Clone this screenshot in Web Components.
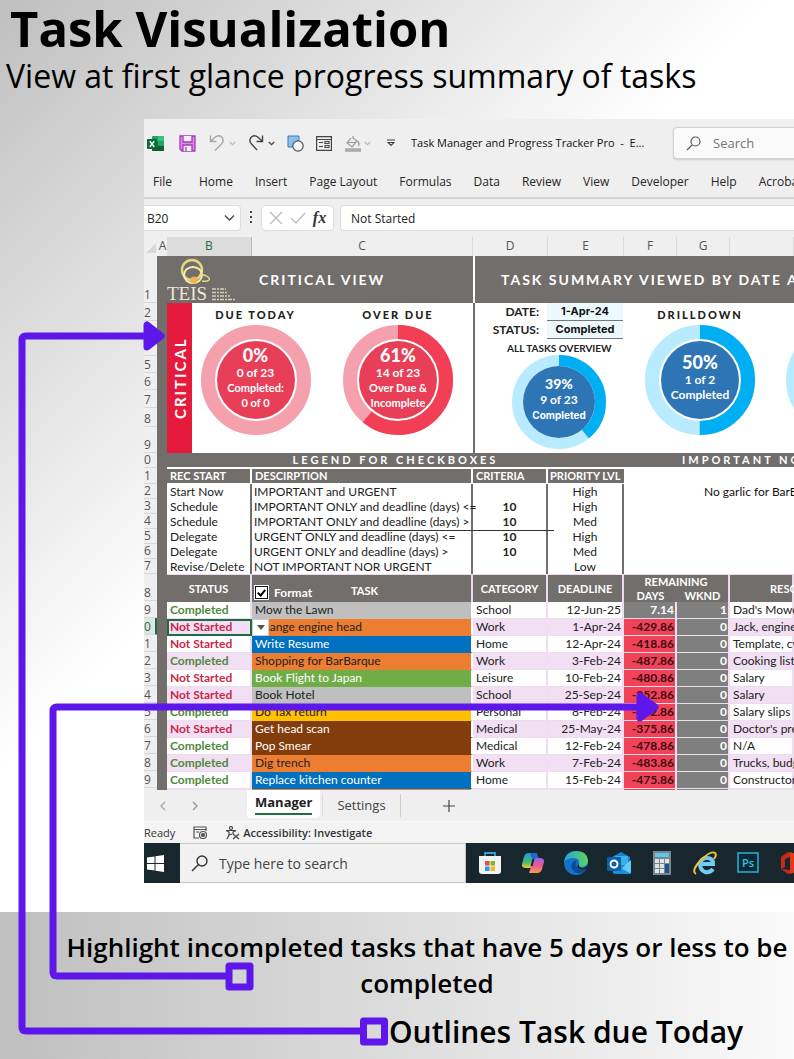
<!DOCTYPE html>
<html lang="en">
<head>
<meta charset="utf-8">
<title>Task Visualization</title>
<style>
html,body{margin:0;padding:0}
body{font-family:"Open Sans","Noto Sans",sans-serif;color:#000;background:#fff}
</style>
</head>
<body>
<task-poster>
  <h1 slot="title">Task Visualization</h1>
  <p slot="subtitle">View at first glance progress summary of tasks</p>
  <excel-window slot="window"></excel-window>
  <p slot="note">Highlight incompleted tasks that have 5 days or less to be completed</p>
  <p slot="note2">Outlines Task due Today</p>
</task-poster>
<script>
const define = (name, html, setup) => customElements.define(name, class extends HTMLElement {
  connectedCallback() {
    if (this.shadowRoot) return;
    const t = document.createElement('template');
    t.innerHTML = typeof html === 'function' ? html(this) : html;
    this.attachShadow({mode: 'open'}).append(t.content.cloneNode(true));
    if (setup) setup(this);
  }
});

/* Poster: heading, window and the two captions, joined by connector arrows */
define('task-poster', `
<style>
:host{display:block;position:relative;background:linear-gradient(135deg,#bfbfbf 0,#fff 550px)}
header{height:119px;box-sizing:border-box;padding-left:6px}
::slotted(h1){margin:0;padding-left:4px;font-size:49px;line-height:56px;font-weight:700;white-space:nowrap}
::slotted([slot=subtitle]){margin:0;font-size:32px;line-height:40px;white-space:nowrap}
main{padding-left:144px;padding-bottom:29px}
footer{box-sizing:border-box;min-height:147px;padding:17px 0 8px 60px;background:linear-gradient(90deg,#bfbfbf,#fafafa)}
::slotted([slot=note]){margin:0;font-size:26px;line-height:36px;font-weight:600;text-align:center}
::slotted([slot=note2]){margin:10px 0 0 329px;font-size:30px;line-height:42px;font-weight:600;white-space:nowrap}
svg{position:absolute;left:0;top:0;pointer-events:none}
</style>
<header><slot name="title"></slot><slot name="subtitle"></slot></header>
<main><slot name="window"></slot></main>
<footer><slot name="note"></slot><slot name="note2"></slot></footer>
<svg width="794" height="1059" fill="none" stroke="#5e17eb" stroke-width="7" stroke-linejoin="round" aria-hidden="true">
<path d="M363 1031H26q-4 0-4-4V340q0-4 4-4H145"/><path d="M147 325V347L161 336Z" fill="#5e17eb"/>
<rect x="363.500" y="1021" width="21" height="21" fill="#d9d9d9"/>
<path d="M228 976H57q-4 0-4-4V711q0-4 4-4H638"/><path d="M640 696V718L655 707Z" fill="#5e17eb"/>
<rect x="229" y="966" width="21" height="21" fill="#d3d3d3"/>
</svg>`);

define('excel-window', `
<style>
:host{display:block;overflow:hidden;background:#efefef}
</style>
<excel-titlebar></excel-titlebar><ribbon-tabs></ribbon-tabs><formula-bar></formula-bar><work-sheet></work-sheet><sheet-tabs></sheet-tabs><status-bar></status-bar><task-bar></task-bar>`);

const chev = c => `<svg width="7" height="5" viewBox="0 0 7 5" fill="none" stroke="${c}" stroke-width="1.300"><path d="M.8 1 3.500 3.700 6.200 1"/></svg>`;
define('excel-titlebar', `
<style>
:host{display:flex;align-items:center;height:48px;padding-left:3px;gap:12px;color:#333;font-size:12px}
button{all:unset;display:flex;flex:none;align-items:center;justify-content:space-between;height:20px}
.g{width:27px}
h2{margin:0;font-size:11px;font-weight:400;white-space:pre;flex:none;width:250px;line-height:18px;color:#111}
label{flex:1;min-width:150px;display:flex;align-items:center;gap:12px;height:30px;border:1px solid #d2d2d2;border-radius:4px;background:#fafafa;padding-left:12px;box-shadow:0 1px 2px #ccc}
input{border:0;background:none;font:13px "Open Sans",sans-serif;width:60px;padding:0}
input::placeholder{color:#737373;opacity:1}
</style>
<button aria-label="Excel" style="width:20px"><svg width="17" height="17" viewBox="0 0 17 17"><rect x="5" y="1" width="12" height="15" rx="1" fill="#21a366"/><path d="M11 1h5q1 0 1 1v4h-6z" fill="#33c481"/><path d="M5 6h6v5H5z" fill="#107c41"/><path d="M11 6h6v5h-6z" fill="#21a366"/><path d="M5 11h12v4q0 1-1 1H6q-1 0-1-1z" fill="#185c37"/><rect y="4" width="10" height="10" rx="1" fill="#0b6b37"/><path d="m2.800 6.200 4.400 5.600M7.200 6.200 2.800 11.800" stroke="#fff" stroke-width="1.500"/></svg></button>
<button aria-label="Save" style="width:18px"><svg width="17" height="17" viewBox="0 0 17 17" fill="#d98be8" stroke="#a03db8" stroke-width="1.300"><path d="M1 1h15v15H3L1 14z"/><path d="M4 1v6h9V1M4 16v-6h9v6" fill="#fbeffd"/><path d="M7 12v4" /></svg></button>
<button class="g" aria-label="Undo"><svg width="16" height="18" viewBox="0 0 16 18" fill="none" stroke="#a5a5a5" stroke-width="1.400"><path d="M1.500 1.500v6h6M1.700 7.300 6 3.200q4-3 7 .3 2.500 3.500-.5 6.500L6 16.500"/></svg>${chev('#bbb')}</button>
<button class="g" aria-label="Redo"><svg width="16" height="18" viewBox="0 0 16 18" fill="none" stroke="#444" stroke-width="1.400"><path d="M14.500 1.500v6h-6M14.300 7.300 10 3.200Q6 .2 3 3.500.5 7 3.500 10L9 16"/></svg>${chev('#444')}</button>
<button aria-label="Shapes" style="width:17px"><svg width="17" height="17" viewBox="0 0 17 17"><path d="M1 1h11v11H1z" fill="#8cc0ea" stroke="#2f7fc4"/><circle cx="11" cy="11" r="5.200" fill="#f4f4f4" stroke="#555" stroke-width="1.200"/></svg></button>
<button aria-label="Form" style="width:16px"><svg width="16" height="15" viewBox="0 0 16 15" fill="none" stroke="#444" stroke-width="1.200"><path d="M.6.600h14.800v13.800H.6zM.6 3.500h14.800"/><path d="M3 6.500h4M3 10.500h4M9 5.500h4v2H9zM9 9.500h4v2H9z" stroke-width="1.100"/></svg></button>
<button class="g" aria-label="Fill colour"><svg width="18" height="17" viewBox="0 0 18 17" fill="none" stroke="#999" stroke-width="1.200"><path d="M7 3 3 8l5 4 5-6-4-3V1M4 7.500h8M13.500 6q2.500 3 1 5"/><path d="M1 15h16" stroke="#aaa" stroke-width="3.500"/></svg>${chev('#bbb')}</button>
<button aria-label="Customize toolbar" style="width:16px;justify-content:center"><svg width="8" height="8" viewBox="0 0 8 8" fill="none" stroke="#444" stroke-width="1.200"><path d="M0 1h8M1 3.500h6L4 6.500z"/></svg></button>
<h2>Task Manager and Progress Tracker Pro  -  E...</h2>
<label><svg width="15" height="15" viewBox="0 0 15 15" fill="none" stroke="#555" stroke-width="1.200"><circle cx="9.500" cy="5.500" r="4.500"/><path d="M6.200 8.800 1 14"/></svg><input placeholder="Search" aria-label="Search"></label>`);

define('ribbon-tabs', `
<style>
:host{display:block;border-bottom:2px solid #d2d2d2;height:30px;overflow:hidden}
nav{display:flex;gap:22px;padding-left:9px;line-height:30px}
a{color:#262626;text-decoration:none;font-size:12px;white-space:nowrap}
a:first-child{margin-right:5px}
</style>
<nav>${['File','Home','Insert','Page Layout','Formulas','Data','Review','View','Developer','Help','Acrobat'].map(x=>`<a href="#">${x}</a>`).join('')}</nav>`);

define('formula-bar', `
<style>
:host{display:flex;height:24px;padding:6px 0 8px;font-size:12px;color:#333}
.b{display:flex;align-items:center;background:#fff;border:1px solid #dcdcdc;border-radius:4px;box-sizing:border-box;height:26px}
.n{width:97px;border-left:0;border-radius:0 4px 4px 0;justify-content:space-between;padding:0 5px 0 3px}
input{border:0;padding:0;background:none;font:12px "Open Sans",sans-serif;color:#222;width:60px}
.d{width:20px;display:grid;place-items:center}
.f{width:73px;gap:7px;justify-content:center}
.v{flex:1;margin-left:6px;border-right:0;border-radius:4px 0 0 4px;padding-left:10px}
.v input{width:200px}
button{all:unset;display:flex}
i{font:italic 700 16px "Liberation Serif",serif;line-height:20px}
</style>
<div class="b n"><input value="B20" aria-label="Name box"><button aria-label="Open names"><svg width="11" height="8" viewBox="0 0 11 8" fill="none" stroke="#444" stroke-width="1.300"><path d="m1 1.500 4.500 4.500L10 1.500"/></svg></button></div>
<div class="d"><svg width="3" height="12" fill="#444"><path d="M0 0h2v2H0zM0 5h2v2H0zM0 10h2v2H0z"/></svg></div>
<div class="b f"><button aria-label="Cancel"><svg width="14" height="14" stroke="#bbb" stroke-width="1.300"><path d="m1 1 12 12M13 1 1 13"/></svg></button><button aria-label="Enter"><svg width="16" height="14" fill="none" stroke="#bbb" stroke-width="1.300"><path d="m1 7 5 5L15 2"/></svg></button><button aria-label="Insert function"><i>fx</i></button></div>
<div class="b v"><input value="Not Started" aria-label="Formula"></div>`);

/* Ring chart; share is the filled part in percent, clockwise from the top */
define('ring-chart', el => {
  const R = +el.getAttribute('size') / 2, gap = el.hasAttribute('gap');
  const r0 = gap ? R - 14 : R - 11, rm = (R + r0) / 2, w = R - r0, c = 2 * Math.PI * rm, p = +el.getAttribute('share') / 100;
  return `<style>
:host{display:grid;width:${R*2}px;height:${R*2}px;color:#fff;flex:none}
svg,div{grid-area:1/1}
div{display:flex;flex-direction:column;align-items:center;justify-content:center;text-align:center;white-space:nowrap;padding-bottom:6px}
</style><svg width="${R*2}" height="${R*2}" fill="none" aria-hidden="true">
<circle cx="${R}" cy="${R}" r="${rm}" stroke="${el.getAttribute('rest')}" stroke-width="${w}"/>
<circle cx="${R}" cy="${R}" r="${rm}" stroke="${el.getAttribute('part')}" stroke-width="${w}" stroke-dasharray="${p*c} ${c}" transform="rotate(-90 ${R} ${R})"/>
<circle cx="${R}" cy="${R}" r="${gap ? r0-2 : r0}" fill="${el.getAttribute('core')}"/></svg><div><slot></slot></div>`;
});

define('view-dashboard', `
<style>
:host{display:grid;grid-template-columns:306px 2px 1fr;grid-template-rows:47px 150px;font-family:Lato,sans-serif;font-weight:700}
.band{background:#716e6c;color:#fff;display:flex;align-items:center;font-size:14px;letter-spacing:2px;white-space:nowrap;min-width:0}
.band svg{flex:none;margin-right:20px;overflow:visible}
.sum{padding-left:26px}
.rule{background:#fff}.rule2{background:#716e6c}
.crit{display:grid;grid-template-columns:25px 127px 154px;background:#fff}
.over{padding-left:4px}
.red{background:#e61a3c;color:#fff;writing-mode:vertical-rl;transform:rotate(180deg);display:flex;align-items:center;justify-content:center;font-size:15px;letter-spacing:2px}
section{display:flex;flex-direction:column;align-items:center}
h3{margin:4px 0 3px;font-size:11px;line-height:15px;letter-spacing:2px;font-weight:900;color:#222;white-space:nowrap}
b{font-size:18px;line-height:20px}
span{font-size:12px;line-height:15px}
.s{font-size:11px}
.right{display:grid;grid-template-columns:148px 154px 1fr;background:#fff;min-width:0}
.ov{align-items:stretch}
dl{margin:0;display:grid;grid-template-columns:72px 76px;grid-auto-rows:18px;font-size:12px;line-height:18px}
dt{text-align:right;padding-right:8px;color:#222}
dd{margin:0;background:#ecfaff;border-bottom:1px solid #777;box-sizing:border-box;text-align:center;font:700 11px/16px Inter,sans-serif;color:#111}
h4{margin:2px 0 0 32px;font-size:10px;line-height:14px;color:#222;white-space:nowrap}
.ov ring-chart{margin-left:37px}
.ov b{font-size:14px;line-height:17px}.ov .c{font:700 10px/16px Inter,sans-serif}
</style>
<div class="band"><svg width="72" height="46" viewBox="0 0 72 46" fill="none">
<ellipse cx="25" cy="13" rx="10" ry="10" stroke="#e4d77c" stroke-width="2.500"/><ellipse cx="26" cy="18" rx="9" ry="8" stroke="#f3edb0" stroke-width="2"/><path d="M34 17q10 3 8 6-2 2-7 1" stroke="#e4d77c" stroke-width="1.500"/><circle cx="27" cy="23" r="3.500" fill="#f4b24a"/>
<text x="0" y="43" font-family="Liberation Serif" font-size="19" font-weight="400" fill="#efe8d8" letter-spacing="0">TEIS</text>
<path d="M45 32h14M45 35.500h16M45 39h18M45 42.500h24" stroke="#d8cfba" stroke-width="1.500" stroke-dasharray="4 1 2 1"/></svg>CRITICAL VIEW</div>
<div class="rule"></div><div class="band sum">TASK SUMMARY VIEWED BY DATE AND STATUS</div>
<div class="crit"><div class="red">CRITICAL</div>
<section><h3>DUE TODAY</h3><ring-chart size="110" share="0" gap rest="#f5a0ad" part="#f23f55" core="#e83e57"><b>0%</b><span>0 of 23</span><span class="s">Completed:</span><span class="s">0 of 0</span></ring-chart></section>
<section class="over"><h3>OVER DUE</h3><ring-chart size="110" share="61" gap rest="#f5a0ad" part="#f23f55" core="#e83e57"><b>61%</b><span>14 of 23</span><span class="s">Over Due &amp;</span><span class="s">Incomplete</span></ring-chart></section></div>
<div class="rule2"></div>
<div class="right"><section class="ov"><dl><dt>DATE:</dt><dd>1-Apr-24</dd><dt>STATUS:</dt><dd>Completed</dd></dl><h4>ALL TASKS OVERVIEW</h4>
<ring-chart size="94" share="39" rest="#b8ebff" part="#00aef3" core="#2e75b6"><b>39%</b><span>9 of 23</span><span class="c">Completed</span></ring-chart></section>
<section><h3>DRILLDOWN</h3><ring-chart size="110" share="50" gap rest="#b8ebff" part="#00aef3" core="#2e75b6"><b>50%</b><span>1 of 2</span><span>Completed</span></ring-chart></section>
<section style="align-items:flex-start;padding:22px 0 0 9px"><ring-chart size="110" share="50" gap rest="#b8ebff" part="#00aef3" core="#2e75b6"></ring-chart></section></div>`);

const legend = [['Start Now','IMPORTANT and URGENT','','High'],['Schedule','IMPORTANT ONLY and deadline (days) &lt;=','10','High'],['Schedule','IMPORTANT ONLY and deadline (days) &gt;','10','Med'],['Delegate','URGENT ONLY and deadline (days) &lt;=','10','High'],['Delegate','URGENT ONLY and deadline (days) &gt;','10','Med'],['Revise/Delete','NOT IMPORTANT NOR URGENT','','Low']];
define('legend-panel', `
<style>
:host{display:grid;grid-template-columns:457px 1fr;grid-template-rows:14px 107px;font:12px Lato,sans-serif;background:#fff;position:relative}
.band{background:#716e6c;color:#fff;font-weight:700;line-height:14px;font-size:11px;letter-spacing:3px;white-space:nowrap;text-align:center}
.n{text-align:left;padding-left:58px}
table{border-collapse:separate;border-spacing:0;table-layout:fixed;width:457px;align-self:start}
th{background:#716e6c;color:#fff;text-align:left;font-size:11px;font-weight:700;height:14px;line-height:14px;padding:0 0 0 3px;border:2px solid #fff;border-left:0;border-bottom-width:1px;white-space:nowrap}
th:last-child{border-right:0;padding-left:2px}
td{height:15px;line-height:15px;padding:0 0 0 2px;border-right:2px solid #716e6c;white-space:nowrap;color:#222}
td:first-child{padding-left:3px}
td:nth-child(n+3){text-align:center;padding:0}
td:nth-child(3){font-weight:700}
p{margin:0;padding:17px 0 0 80px;line-height:15px;font-size:12px;white-space:nowrap;color:#111}
hr{position:absolute;left:134px;top:77px;width:253px;margin:0;border:0;border-top:1px solid #333}
</style>
<div class="band">LEGEND FOR CHECKBOXES</div><div class="band n">IMPORTANT NOTES</div>
<table><colgroup><col style="width:85px"><col style="width:221px"><col style="width:75px"><col style="width:76px"></colgroup>
<thead><tr><th>REC START</th><th>DESCIRPTION</th><th>CRITERIA</th><th>PRIORITY LVL</th></tr></thead>
<tbody>${legend.map(r=>`<tr>${r.map(c=>`<td>${c}</td>`).join('')}</tr>`).join('')}</tbody></table>
<p>No garlic for BarBarque</p><hr>`);

const O='#ed7d31',B='#0070c0',G='#70ad47',S='#bfbfbf',Y='#ffc000',N='#833c0b';
const tasks = [
['Completed','Mow the Lawn',S,'School','12-Jun-25','7.14','1',"Dad's Mower"],
['Not Started','Change engine head',O,'Work','1-Apr-24','-429.86','0','Jack, engine'],
['Not Started','Write Resume',B,'Home','12-Apr-24','-418.86','0','Template, cv'],
['Completed','Shopping for BarBarque',O,'Work','3-Feb-24','-487.86','0','Cooking list'],
['Not Started','Book Flight to Japan',G,'Leisure','10-Feb-24','-480.86','0','Salary'],
['Not Started','Book Hotel',S,'School','25-Sep-24','-252.86','0','Salary'],
['Completed','Do Tax return',Y,'Personal','8-Feb-24','-482.86','0','Salary slips'],
['Not Started','Get head scan',N,'Medical','25-May-24','-375.86','0',"Doctor's pre"],
['Completed','Pop Smear',N,'Medical','12-Feb-24','-478.86','0','N/A'],
['Completed','Dig trench',O,'Work','7-Feb-24','-483.86','0','Trucks, budget'],
['Completed','Replace kitchen counter',B,'Home','15-Feb-24','-475.86','0','Constructor'],
['','',O,'','','','','']];
define('task-table', `
<style>
:host{display:block;height:216px;overflow:hidden;font:12px Lato,sans-serif}
table{border-collapse:separate;border-spacing:0;table-layout:fixed;width:100%;background:#fff}
th{background:#716e6c;color:#fff;padding:0;font-size:11px;line-height:13px;height:14px;border-right:2px solid #ecd8ef;white-space:nowrap}
.nb{border-right:0}
thead tr:first-child th{border-top:1px solid #ecd8ef;height:12px}
td{height:17px;line-height:16px;padding:0 3px;box-sizing:border-box;white-space:nowrap;border-right:2px solid #f0dcf3;border-bottom:1px solid #ecdcf0;color:#222}
tbody tr:nth-child(even) td{background:#f2dff4}
td:first-child{font-weight:700;color:#c8284a}
td.ok{color:#4f8a3c}
td:nth-child(2){background:var(--c)!important;border-color:var(--c);border-right-color:#fff;color:#222}
td.w{color:#fff!important}
td:nth-child(n+4):nth-child(-n+6){text-align:right;padding-right:1px}
tbody tr td:nth-child(5){background:#f0435a;font-weight:700;color:#400a14}
tbody tr td:nth-child(6){background:#7f7f7f;font-weight:700;color:#fff}
tbody tr:first-child td:nth-child(5){background:#7f7f7f;color:#fff}
td.sel{position:relative;outline:2px solid #1d6b41;outline-offset:-2px}
.drop{position:absolute;z-index:1;left:85px;top:0;width:17px;height:17px;padding:0;border:1px solid #ccc;background:#fff;display:grid;place-items:center}
label{float:left;display:flex;align-items:flex-end;gap:6px;padding:8px 0 0 3px;line-height:13px;font-size:12px}
input{appearance:none;margin:0;width:13px;height:13px;border:1px solid #111;outline:1px solid #fff;background:#fff}
input:checked{display:grid;place-items:center}
input:checked::after{content:"";width:3px;height:6px;border:solid #000;border-width:0 2px 2px 0;transform:rotate(40deg);margin-top:-2px}
.t{display:block;padding-top:6px;padding-right:93px;text-align:right}
</style>
<table><colgroup><col style="width:85px"><col style="width:221px"><col style="width:75px"><col style="width:76px"><col style="width:53px"><col style="width:53px"><col></colgroup>
<thead><tr><th rowspan="2">STATUS</th><th rowspan="2"><label><input type="checkbox" checked>Format</label><span class="t">TASK</span></th><th rowspan="2">CATEGORY</th><th rowspan="2">DEADLINE</th><th colspan="2">REMAINING</th><th rowspan="2" style="text-align:left;padding-left:40px">RESOURCES</th></tr>
<tr><th class="nb">DAYS</th><th>WKND</th></tr></thead>
<tbody>${tasks.map((r,i)=>`<tr><td class="${r[0]==='Completed'?'ok':''}${i===1?' sel':''}">${r[0]}${i===1?'<button class="drop" aria-label="Choose status"><svg width="8" height="5"><path d="M0 0h8L4 5z" fill="#555"/></svg></button>':''}</td><td style="--c:${r[2]}" class="${[B,G,N].includes(r[2])?'w':''}">${r[1]}</td>${r.slice(3).map(c=>`<td>${c}</td>`).join('')}</tr>`).join('')}</tbody></table>`);

const rows = [[47,'1'],[18,'2'],[18,''],[17,''],[17,'5'],[17,'6'],[18,'7'],[19,'8'],[26,'9'],[15,'0'],[16,'1'],[15,'2'],[15,'3'],[15,'4'],[15,'5'],[15,'6'],[15,'7'],[27,'8'],...'90123456789'.split('').map(d=>[17,d])];
define('work-sheet', `
<style>
:host{display:grid;grid-template-columns:13px 10px 1fr;grid-template-rows:19px 534px;font-size:12px;color:#555}
.cols{grid-column:1/-1;display:grid;grid-template-columns:13px 10px 85px 221px 75px 76px 53px 53px 1fr;text-align:center;line-height:18px}
.cols span{border-right:1px solid #dadada;box-sizing:border-box}
.cols .a{border:0;text-indent:1px}
.cols .b{background:#dcdcdc;color:#1d7044;border-bottom:2px solid #1d7044;border-right:1px solid #bbb}
.nums{display:flex;flex-direction:column;overflow:hidden}
.nums span{flex:none;box-sizing:border-box;border-bottom:1px solid #d8d8d8;display:flex;align-items:flex-end;line-height:14px}
.nums .on{background:#dfe5e1;color:#1d7044;border-right:2px solid #1d7044}
.gray{background:#716e6c}
.body{min-width:0;overflow:hidden}
</style>
<div class="cols"><span class="a"><svg width="11" height="17"><path d="M10 6v10H0z" fill="#d8d8d8"/></svg></span><span class="a">A</span><span class="b">B</span><span>C</span><span>D</span><span>E</span><span>F</span><span>G</span><span></span></div>
<div class="nums">${rows.map(([h,n],i)=>`<span style="height:${h}px"${i===19?' class="on"':''}>${n}</span>`).join('')}</div>
<div class="gray"></div>
<div class="body"><view-dashboard></view-dashboard><legend-panel></legend-panel><task-table></task-table></div>`);

define('sheet-tabs', `
<style>
:host{display:flex;align-items:stretch;height:31px;font-size:14px;color:#444;line-height:28px;background:#efefef;border-bottom:1px solid #fafafa}
button{all:unset;width:32px;display:grid;place-items:center}
a{color:inherit;text-decoration:none}
.m{margin-left:36px;width:73px;height:28px;background:#fff;border-radius:0 0 4px 4px;text-align:center;font-weight:700;color:#222}
.m span{display:block;margin:0 8px;line-height:25px;height:25px;box-sizing:border-box;border-bottom:2px solid #1d7044;font-size:13px}
.s{width:77px;text-align:center;border-right:1px solid #ccc;margin:4px 0;line-height:22px;border-left:1px solid #ddd;margin-left:2px;font-size:13px}
.p{width:95px}
</style>
<button aria-label="Previous sheet" style="margin-left:3px"><svg width="8" height="12" fill="none" stroke="#aaa" stroke-width="1.400"><path d="M6 2 2 6l4 4"/></svg></button><button aria-label="Next sheet"><svg width="8" height="12" fill="none" stroke="#999" stroke-width="1.400"><path d="m2 2 4 4-4 4"/></svg></button>
<a href="#" class="m"><span>Manager</span></a><a href="#" class="s">Settings</a>
<button class="p" aria-label="New sheet"><svg width="12" height="12" stroke="#444" stroke-width="1.200"><path d="M6 0v12M0 6h12"/></svg></button>`);

define('status-bar', `
<style>
:host{display:flex;align-items:center;height:21px;background:#f3f3f3;font-size:11px;color:#333}
svg{margin-left:18px}
svg+svg{margin-left:17px}
b{font-weight:600;margin-left:3px;font-size:11px;white-space:nowrap}
span{white-space:nowrap}
</style>
<span>Ready</span><svg width="15" height="13" fill="none" stroke="#555" stroke-width="1.200"><path d="M13 5V1H1v11h5M1 3.500h12M3 6h3"/><circle cx="10" cy="9" r="3.500"/><circle cx="10" cy="9" r="1.500" fill="#555"/></svg>
<svg width="15" height="14" fill="none" stroke="#444" stroke-width="1.200"><circle cx="6" cy="2" r="1.500"/><path d="M1 4.500 4 6v3l-2 4M11 4.500 8 6v2M1 4.500h10M4 9l3-1"/><path d="m8 8 6 5M14 8l-6 5"/></svg><b>Accessibility: Investigate</b>`);

define('task-bar', `
<style>
:host{display:flex;height:40px;background:#18272d;overflow:hidden}
.w{all:unset;flex:none;width:36px;display:grid;place-items:center left;padding-left:3px;box-sizing:border-box}
label{width:286px;box-sizing:border-box;flex:none;height:40px;border:1px solid #c5c5c5;border-left:0;background:#f1f1f1;display:flex;align-items:center;gap:11px;padding-left:11px}
input{border:0;background:none;padding:0;font:14px "Open Sans",sans-serif;width:200px}
input::placeholder{color:#444;opacity:1}
nav{display:flex;align-items:center;gap:19px;margin-left:12px}
nav button{all:unset;flex:none;width:24px;height:24px;display:flex}
text{font-family:"Open Sans",sans-serif}
</style>
<button class="w" aria-label="Start"><svg width="17" height="17" fill="#fff"><path d="M0 2.500 7.500 1.500V8H0zM8.500 1.300 17 0v8H8.500zM0 9h7.500v6.500L0 14.500zM8.500 9H17v8L8.500 15.700z"/></svg></button>
<label><svg width="17" height="17" fill="none" stroke="#333" stroke-width="1.400"><circle cx="11" cy="6" r="5"/><path d="M7.300 9.700 1 16"/></svg><input placeholder="Type here to search" aria-label="Type here to search"></label>
<nav>
<button aria-label="Store"><svg width="24" height="24"><path d="M7 6V2h10v4" fill="none" stroke="#3a9bdc" stroke-width="1.800"/><path d="M1 5h22v15q0 3-3 3H4q-3 0-3-3z" fill="#f2f2f2"/><path d="M7 10h4.500v4.500H7z" fill="#e8503a"/><path d="M12.500 10H17v4.500h-4.500z" fill="#7fba2a"/><path d="M7 15.500h4.500V20H7z" fill="#2a9be0"/><path d="M12.500 15.500H17V20h-4.500z" fill="#f8b71c"/></svg></button>
<button aria-label="Copilot"><svg width="24" height="24"><defs><linearGradient id="c1" x2="0" y2="1"><stop stop-color="#1a9de8"/><stop offset=".6" stop-color="#49b86e"/><stop offset="1" stop-color="#f2c92d"/></linearGradient><linearGradient id="c2" x2="0" y2="1"><stop stop-color="#a063e8"/><stop offset=".5" stop-color="#ea5a96"/><stop offset="1" stop-color="#f5a04d"/></linearGradient></defs><path d="M8 2h8l-3.500 11q-1 4-4 4H4q-4-1-3-4l2-7q1-4 5-4z" fill="url(#c1)"/><path d="M16 7h4q4 1 3 4l-2 7q-1 4-5 4H8l3.500-11q1-4 4.500-4z" fill="url(#c2)"/><path d="M9 2h5q2 0 3 3l.600 2H16q-3 0-4 3" fill="#2266c9"/><path d="m12.500 8-2 7" stroke="#18272d" stroke-width="2"/></svg></button>
<button aria-label="Edge"><svg width="24" height="24"><defs><linearGradient id="e1"><stop stop-color="#1da4e0"/><stop offset="1" stop-color="#62d55a"/></linearGradient></defs><circle cx="12" cy="12" r="12" fill="#1572c4"/><path d="M0 11Q2 0 12 0q11 0 12 9 0 6-6 7-4 0-3-3 1-6-5-6-7 0-10 4z" fill="url(#e1)"/><path d="M10 10q-4 3-2 8 3 5 10 4l5-4q-5 2-9-1-4-3-1-8z" fill="#0b4c9c"/><path d="M15 13q-1 4 4 4 4-1 5-4l-1 5q-8 2-10-3z" fill="#18272d"/></svg></button>
<button aria-label="Outlook"><svg width="24" height="24"><path d="M5 6 14 1l9 5v16H6z" fill="#1583d0"/><path d="M8 5h13v9H8z" fill="#39b2ec"/><path d="M24 9v12q0 2-2 2H8L24 9z" fill="#65cdf5"/><path d="m6 12 18 11H8q-2 0-2-2z" fill="#1b8fdd"/><rect y="6" width="14" height="14" rx="1" fill="#0f5ea8"/><circle cx="7" cy="13" r="3.500" fill="none" stroke="#fff" stroke-width="2"/></svg></button>
<button aria-label="Calculator"><svg width="24" height="24"><rect x="3" width="18" height="24" fill="#7b858d"/><path d="M5 2h14v4H5z" fill="#59c8ec"/><path d="M5 8h4v4H5zM10 8h4v4h-4zM15 8h4v4h-4zM5 13h4v4H5zM10 13h4v4h-4zM5 18h4v4H5zM10 18h4v4h-4z" fill="#dfe4e7"/><path d="M15 13h4v9h-4z" fill="#214f94"/></svg></button>
<button aria-label="Internet Explorer"><svg width="24" height="24" fill="none"><path d="M20 18q-3 4-8 3-5-2-5-8 1-6 7-6 6 0 6 6H8" stroke="#71cbf4" stroke-width="4"/><path d="M3 23Q-2 20 7 10 18-1 22 2q2 2-1 6" stroke="#efc331" stroke-width="2"/></svg></button>
<button aria-label="Photoshop"><svg width="24" height="24"><rect x="2" y="2" width="20" height="19" fill="#0b2836" stroke="#27b3d6" stroke-width="1.500"/><text x="6" y="16" font-size="11" font-weight="600" fill="#3cc4e8">Ps</text></svg></button>
<button aria-label="Office"><svg width="24" height="24"><path d="m9 1 7 2v18l-7 2-7-5 9 1V6L6 8v8l-4 2V6z" fill="#cc2818"/><path d="m11 1 9 3v16l-9 3V1z" fill="#e03a1a"/></svg></button>
</nav>`);
</script>
</body>
</html>
